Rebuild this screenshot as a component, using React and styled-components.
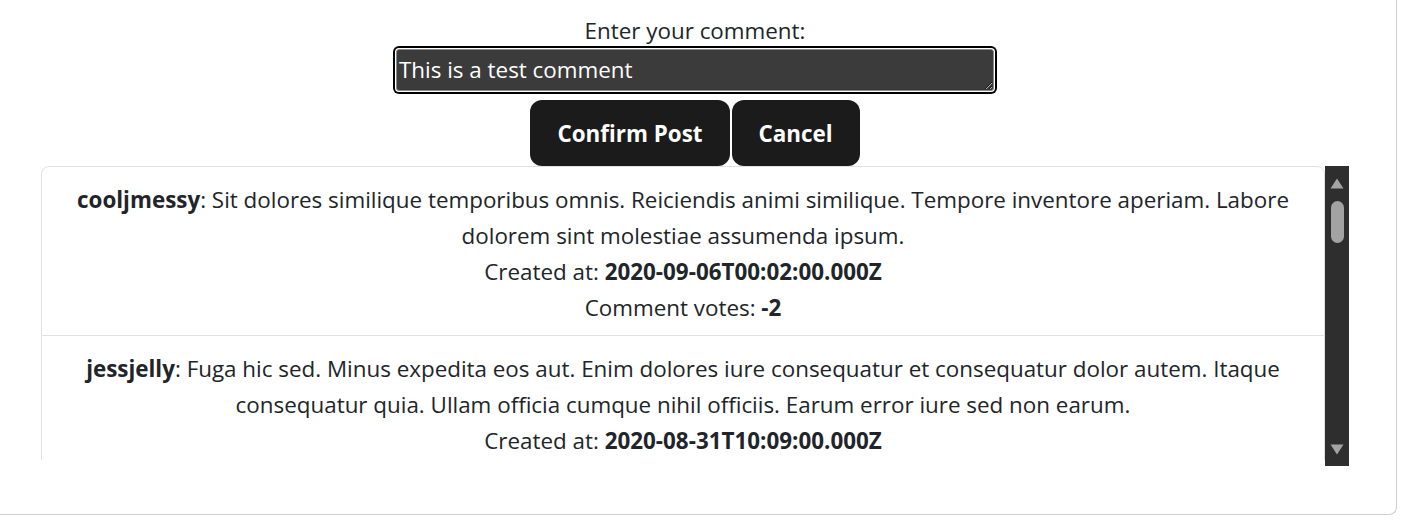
import styled, { createGlobalStyle } from "styled-components";

const comments = [
  {
    author: "cooljmessy",
    body: "Sit dolores similique temporibus omnis. Reiciendis animi similique. Tempore inventore aperiam. Labore dolorem sint molestiae assumenda ipsum.",
    created: "2020-09-06T00:02:00.000Z",
    votes: -2,
  },
  {
    author: "jessjelly",
    body: "Fuga hic sed. Minus expedita eos aut. Enim dolores iure consequatur et consequatur dolor autem. Itaque consequatur quia. Ullam officia cumque nihil officiis. Earum error iure sed non earum.",
    created: "2020-08-31T10:09:00.000Z",
    votes: 3,
  },
];

const GlobalStyle = createGlobalStyle`
  * { box-sizing: border-box; }
  body {
    margin: 0;
    background: #fff;
    font-family: "Open Sans", "Noto Sans", sans-serif;
    font-size: 22.4px;
    line-height: 36px;
    color: #212529;
  }
`;

export default function App() {
  return (
    <>
      <GlobalStyle />
      <Card>
        <Column>
          <Label htmlFor="comment">Enter your comment:</Label>
          <TextBox id="comment" defaultValue="This is a test comment" />
          <Buttons>
            <Button>Confirm Post</Button>
            <Button>Cancel</Button>
          </Buttons>
          <ListWrap>
            <List>
              {comments.map((c, index) => (
                <Item key={index} first={index === 0}>
                  <p>
                    <b>{c.author}</b>: {c.body}
                  </p>
                  <p>
                    Created at: <b>{c.created}</b>
                  </p>
                  <p>
                    Comment votes: <b>{c.votes}</b>
                  </p>
                </Item>
              ))}
            </List>
            <Scrollbar />
          </ListWrap>
        </Column>
      </Card>
    </>
  );
}

function Scrollbar() {
  return (
    <Track>
      <svg width="14" height="11" viewBox="0 0 14 11">
        <path d="M7 0.5 L13.5 10.5 L0.5 10.5 Z" fill="#a3a3a3" />
      </svg>
      <Thumb />
      <Spacer />
      <svg width="14" height="11" viewBox="0 0 14 11">
        <path d="M0.5 0.5 L13.5 0.5 L7 10.5 Z" fill="#a3a3a3" />
      </svg>
    </Track>
  );
}

const Card = styled.div`
  width: 1397px;
  padding: 13px 6px 48px 0;
  border-right: 1px solid #cfcfcf;
  border-bottom: 1px solid #cfcfcf;
  border-bottom-right-radius: 8px;
`;

const Column = styled.div`
  display: flex;
  flex-direction: column;
  align-items: center;
`;

const Label = styled.label`
  display: block;
  height: 33px;
`;

const TextBox = styled.textarea`
  width: 598px;
  height: 42px;
  margin: 3px 0 9px;
  padding: 2px 2px 0;
  background: #3b3b3b;
  color: #fff;
  font-family: inherit;
  font-size: 22.4px;
  line-height: 36px;
  border: 1px solid #8a8a8a;
  border-radius: 3px;
  box-shadow: 0 0 0 1px #fff, 0 0 0 3px #000;
  outline: none;
  resize: vertical;
  overflow: hidden;
`;

const Buttons = styled.div`
  display: flex;
  gap: 2px;
`;

const Button = styled.button`
  height: 66px;
  padding: 0 27px;
  border: none;
  border-radius: 12px;
  background: #1b1b1b;
  color: #fff;
  font-family: inherit;
  font-size: 22.4px;
  font-weight: 700;
`;

const ListWrap = styled.div`
  display: flex;
  align-items: flex-start;
  width: 1308px;
  height: 300px;
`;

const List = styled.div`
  flex: 1;
  height: 294px;
  overflow: hidden;
`;

const Item = styled.div`
  padding: 15px 24px 9px;
  text-align: center;
  border: 1px solid #dee2e6;
  border-top-width: ${(p) => (p.first ? "1px" : "0")};
  border-radius: ${(p) => (p.first ? "8px 8px 0 0" : "0")};
  p { margin: 0; }
  b { font-weight: 700; }
`;

const Track = styled.div`
  width: 24px;
  height: 300px;
  background: #2e2e2e;
  display: flex;
  flex-direction: column;
  align-items: center;
  padding: 12px 0 11px;
`;

const Thumb = styled.div`
  width: 13px;
  height: 42px;
  margin-top: 12px;
  border-radius: 7px;
  background: #a3a3a3;
`;

const Spacer = styled.div`
  flex: 1;
`;
